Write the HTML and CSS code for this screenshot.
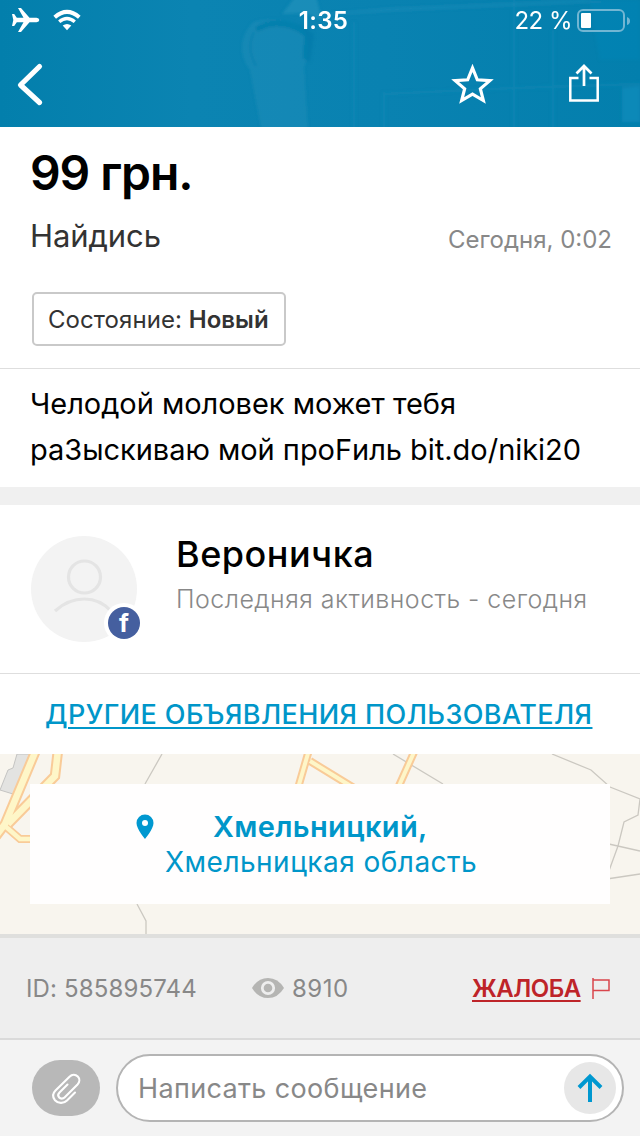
FILE: index.html
```html
<!DOCTYPE html>
<html lang="ru">
<head>
<meta charset="utf-8">
<title>Объявление</title>
<link rel="stylesheet" href="styles.css">
</head>
<body>
<div class="screen">
  <header class="header">
    <svg class="header-photo" viewBox="0 0 640 128" aria-hidden="true">
      <defs><filter id="soft"><feGaussianBlur stdDeviation="1.5"/></filter>
      <linearGradient id="tone"><stop offset="0" stop-color="#037fac"/><stop offset=".3" stop-color="#0b84b2"/><stop offset=".6" stop-color="#0982b1"/><stop offset="1" stop-color="#037fad"/></linearGradient></defs>
      <path d="M0 0H640V128H0z" fill="url(#tone)"/>
      <g filter="url(#soft)">
        <path d="M296 -4H316L322 20 305 13 282 14z" fill="#2b97c0" opacity=".5"/>
        <path d="M254 22C240 34 238 54 250 70L262 132H308L304 68C312 40 306 24 286 20Q266 18 254 22z" fill="#2492bd" opacity=".35"/>
        <path d="M254 28Q276 12 306 28L314 34 310 62 302 58 304 36Q280 20 258 32z" fill="#0278a8" opacity=".55"/>
        <path d="M254 32Q246 48 256 66" fill="none" stroke="#0b7cab" stroke-width="2" opacity=".6"/>
        <path d="M318 14L388 8 582 0 604 2 396 11 318 16z" fill="#1f90bb" opacity=".5"/>
        <path d="M354 22V128M384 92V128M384 94L514 88 640 84M514 0V128M553 30V128" fill="none" stroke="#1a8cb8" stroke-width="2.500" opacity=".4"/>
        <path d="M590 0H640V60H600z" fill="#1088b9" opacity=".4"/>
        <path d="M622 88L640 86V122H622z" fill="#168fc0" opacity=".6"/>
      </g>
    </svg>
    <div class="status">
      <div class="status-left">
        <svg class="plane" viewBox="0 0 28 26"><path d="M0 7H2.200L4.800 10.700H11.500L6 1H9L17.500 10.700H24.500Q27.300 11.200 27.300 13Q27.300 14.800 24.500 15.300H17.500L9 25H6L11.500 15.300H4.800L2.200 19H0L1.300 13z" fill="#fff"/></svg>
        <svg class="wifi" viewBox="0 0 28 21"><path d="M1.700 7.200Q14-3.500 26.300 7.200" fill="none" stroke="#fff" stroke-width="4"/><path d="M6.200 11.800Q14 5.200 21.800 11.800" fill="none" stroke="#fff" stroke-width="3.400"/><path d="M9.700 15.600Q14 12.200 18.300 15.600L14 20.300z" fill="#fff"/></svg>
      </div>
      <span class="clock">1:35</span>
      <div class="status-right">
        <span class="percent">22 %</span>
        <svg class="battery" viewBox="0 0 54 24"><rect x="1" y="1" width="46" height="21" rx="5" fill="none" stroke="#72b6d3" stroke-width="2"/><rect x="4" y="4" width="10" height="15" rx="1" fill="#fff"/><path d="M50 8Q53 9 53 12T50 16z" fill="#72b6d3"/></svg>
      </div>
    </div>
    <nav class="nav">
      <svg class="back" viewBox="0 0 28 44"><path d="M23.500 3.500L4.500 22L23.500 39.500" fill="none" stroke="#fff" stroke-width="5.200" stroke-linecap="round" stroke-linejoin="round"/></svg>
      <div class="actions">
        <svg class="star" viewBox="0 0 42 40"><path d="M21 5.200L25.300 15.800L36.500 16.500L28 23.800L30.700 34.300L21 28.600L11.300 34.300L14 23.800L5.500 16.500L16.700 15.800z" fill="none" stroke="#fff" stroke-width="2.800"/></svg>
        <svg class="share" viewBox="0 0 30 38"><path d="M9.500 14H1.300V36.500H28.700V14H20.500" fill="none" stroke="#fff" stroke-width="2.500"/><path d="M15 22V3M7.500 9.500L15 2L22.500 9.500" fill="none" stroke="#fff" stroke-width="2.700"/></svg>
      </div>
    </nav>
  </header>

  <section class="summary">
    <h1 class="price">99 грн.</h1>
    <div class="title-row">
      <span class="title">Найдись</span>
      <span class="date">Сегодня, 0:02</span>
    </div>
    <div class="tag"><span>Состояние:</span> <b>Новый</b></div>
  </section>

  <section class="description"><span>Челодой моловек может тебя</span><br><span>раЗыскиваю мой проFиль bit.do/niki20</span></section>

  <section class="seller">
    <div class="avatar">
      <svg class="avatar-art" viewBox="0 0 110 106"><circle cx="53" cy="53" r="53" fill="#f3f3f3"/><g fill="none" stroke="#e4e4e4" stroke-width="3.200"><circle cx="53.500" cy="41" r="16"/><path d="M24 75Q37 63 53.500 63Q69 63 80 75"/></g><circle cx="93" cy="87" r="20" fill="#fff"/></svg>
      <span class="badge">f</span>
    </div>
    <div class="seller-info">
      <h2 class="seller-name">Вероничка</h2>
      <p class="activity">Последняя активность - сегодня</p>
    </div>
  </section>

  <section class="more"><a class="more-link">ДРУГИЕ ОБЪЯВЛЕНИЯ ПОЛЬЗОВАТЕЛЯ</a></section>

  <section class="map">
    <svg class="map-art" viewBox="0 0 640 180" aria-hidden="true">
      <path d="M17 0H31L13 40L0 36L8 16L13 14z" fill="#e3e3e1" stroke="#c4c4c2"/>
      <g fill="none" stroke="#cbc8c1" stroke-width="1.300">
        <path d="M162 0L145 30M137 150L146 167V180M393 0L443 30M552 0L591 16L610 33L640 45L638 61L624 68L618 92L606 125M600 88L640 97M600 126L640 120"/>
      </g>
      <g fill="none" stroke="#f9cb98">
        <path d="M36 -4L5 70L-4 82M58 -4L55 22L8 70" stroke-width="10.500"/>
        <path d="M5 72L20 85H45" stroke-width="8"/>
        <path d="M309 -4L298 34M310 7L354 34M415 -4L398 34" stroke-width="8"/>
      </g>
      <g fill="none" stroke="#fef6c8">
        <path d="M36 -4L5 70L-4 82M58 -4L55 22L8 70" stroke-width="6.500"/>
        <path d="M5 72L20 85H45" stroke-width="4.500"/>
        <path d="M309 -4L298 34M310 7L354 34M415 -4L398 34" stroke-width="4"/>
      </g>
    </svg>
    <div class="location">
      <div class="city-row">
        <svg class="pin" viewBox="0 0 18 26"><path d="M9 .500A8.500 8.500 0 0 0 .500 9C.500 15 9 25 9 25S17.500 15 17.500 9A8.500 8.500 0 0 0 9 .500z" fill="#0098d0"/><circle cx="9" cy="9" r="3" fill="#fff"/></svg>
        <span class="city">Хмельницкий,</span>
      </div>
      <span class="region">Хмельницкая область</span>
    </div>
  </section>

  <section class="meta">
    <span class="ad-id">ID: 585895744</span>
    <svg class="eye" viewBox="0 0 32 20"><path d="M0 10Q6 0 16 0T32 10Q26 20 16 20T0 10z" fill="#b5b5b3"/><circle cx="16" cy="10" r="5.700" fill="#b5b5b3" stroke="#eee" stroke-width="2.800"/></svg>
    <span class="views">8910</span>
    <a class="report">ЖАЛОБА</a>
    <svg class="flag" viewBox="0 0 18 21"><path d="M1 0V21M1 2H17V12.500H1" fill="none" stroke="#d9464c" stroke-width="1.500"/></svg>
  </section>

  <footer class="composer">
    <div class="attach"><svg class="clip" viewBox="0 0 28 31"><path d="M23 19.500L15 27.500C11.500 31 6 30.500 3 27.200C.300 24 .500 20.500 3.500 17.500L17.500 3.700C20 1.300 23.500 1.300 25.800 3.500C28 5.700 27.800 9 25.500 11.500L12.500 24.500C11 26 8.500 26 7.200 24.500C5.800 23 6 21 7.500 19.500L15.500 11.500" fill="none" stroke="#fff" stroke-width="2.100" stroke-linecap="round"/></svg></div>
    <div class="field">
      <span class="placeholder">Написать сообщение</span>
      <div class="send"><svg class="arrow" viewBox="0 0 26 28"><path d="M13 28V2M2 13.500L13 2.500L24 13.500" fill="none" stroke="#0098d0" stroke-width="4"/></svg></div>
    </div>
  </footer>
</div>
</body>
</html>
```
FILE: styles.css
```css
* { box-sizing: border-box; margin: 0; }
body { font-family: Inter, "Noto Sans", sans-serif; background: #fff; color: #000; }
svg { display: block; flex: none; overflow: visible; }
span, a, h1, h2, p { white-space: nowrap; }
.screen { width: 640px; height: 1136px; overflow: hidden; display: flex; flex-direction: column; }
.screen > * { flex: none; }

.header { height: 127px; position: relative; background: #0480ae; color: #fff; overflow: hidden; }
.header-photo { position: absolute; left: 0; top: 0; width: 640px; height: 128px; }
.status { position: relative; height: 40px; padding: 0 12px; display: grid; grid-template-columns: 1fr auto 1fr; align-items: center; }
.status-left { display: flex; align-items: center; gap: 13px; }
.plane { width: 28px; height: 26px; }
.wifi { width: 28px; height: 21px; }
.clock { font-size: 24px; font-weight: 600; letter-spacing: .3px; line-height: 38px; padding: 2px 0 0 7px; }
.status-right { display: flex; align-items: center; justify-content: flex-end; gap: 6px; }
.percent { font-size: 24px; line-height: 38px; letter-spacing: -.5px; padding-top: 2px; margin-right: -1px; }
.battery { width: 54px; height: 24px; margin: 1px -3px 0 0; }
.nav { position: relative; height: 87px; padding: 0 41px 0 16px; display: flex; align-items: center; justify-content: space-between; }
.back { width: 28px; height: 44px; margin-top: 2px; }
.actions { display: flex; align-items: center; gap: 73px; }
.star { width: 47px; height: 45px; margin-top: 2px; }
.share { width: 30px; height: 38px; margin-top: -2px; }

.summary { height: 242px; padding: 17px 28px 0 30px; border-bottom: 1px solid #dedede; }
.price { font-size: 48px; font-weight: 600; line-height: 58px; letter-spacing: -1.1px; }
.title-row { display: flex; justify-content: space-between; align-items: baseline; margin-top: 14px; line-height: 40px; }
.title { font-size: 31px; color: #333; letter-spacing: -.1px; }
.date { font-size: 24px; line-height: 43px; color: #888; position: relative; top: 1px; }
.tag { width: 254px; height: 54px; margin: 32px 0 0 2px; padding-left: 14px; border: 2px solid #c9c9c9; border-radius: 5px; font-size: 24px; line-height: 51px; color: #333; white-space: nowrap; letter-spacing: .05px; }
.tag b { font-weight: 600; }

.description { height: 118px; padding: 12px 30px 0; font-size: 29px; line-height: 46px; letter-spacing: -.03px; }

.seller { height: 187px; border-top: 18px solid #f0f0f0; border-bottom: 1px solid #dedede; display: flex; padding: 31px 0 0 31px; }
.avatar { position: relative; width: 110px; height: 106px; }
.avatar-art { width: 110px; height: 106px; }
.badge { position: absolute; left: 77px; top: 71px; width: 32px; height: 32px; border-radius: 50%; background: #455f9f; color: #fff; text-align: center; font: 700 25px/33px Inter, sans-serif; }
.seller-info { padding-left: 35px; }
.seller-name { font-size: 36px; font-weight: 500; line-height: 40px; margin-top: -2px; letter-spacing: .5px; }
.activity { font-size: 25px; font-weight: 300; line-height: 32px; color: #888; margin-top: 9px; letter-spacing: .47px; }

.more { height: 80px; padding-left: 45px; }
.more-link { font-size: 27px; line-height: 81px; font-weight: 500; color: #0096c9; letter-spacing: .41px; text-decoration: underline; text-decoration-thickness: 2px; text-underline-offset: 3px; }

.map { height: 180px; position: relative; padding: 30px; background: #f8f5ee; overflow: hidden; }
.map-art { position: absolute; left: 0; top: 0; width: 640px; height: 180px; }
.location { position: relative; height: 120px; background: #fffefe; padding-top: 26px; color: #0096c9; font-size: 28px; line-height: 35px; letter-spacing: .47px; }
.city-row { display: flex; align-items: center; height: 35px; padding-left: 106px; }
.pin { width: 18px; height: 26px; margin-top: -2px; }
.city { margin: -2px 0 0 59px; font-size: 29px; font-weight: 600; letter-spacing: .35px; }
.region { display: block; margin-left: 135px; }

.meta { height: 106px; border-top: 4px solid #dfdfdd; border-bottom: 2px solid #dadada; background: #eee; display: flex; align-items: center; padding-left: 26px; font-size: 24px; color: #888; letter-spacing: .15px; }
.ad-id { width: 226px; padding-top: 1px; }
.eye { width: 32px; height: 20px; }
.views { margin-left: 8px; width: 180px; padding-top: 1px; letter-spacing: .5px; }
.report { color: #be2429; font-weight: 600; width: 110px; padding-top: 1px; letter-spacing: -.5px; text-decoration: underline; text-decoration-thickness: 2px; text-underline-offset: 3px; }
.flag { width: 18px; height: 21px; margin-left: 10px; }

.composer { height: 96px; background: #f3f3f3; display: flex; align-items: center; padding-left: 32px; gap: 16px; }
.attach { width: 68px; height: 56px; border-radius: 28px; background: #b8b8b8; display: grid; place-items: center; }
.clip { width: 28px; height: 31px; }
.field { width: 508px; height: 68px; border: 2px solid #b4b4b4; border-radius: 34px; background: #fff; display: flex; align-items: center; justify-content: space-between; padding: 0 6px 0 20px; }
.placeholder { font-size: 27px; color: #888; letter-spacing: .35px; }
.send { width: 52px; height: 52px; border-radius: 50%; background: #e7e7e7; display: grid; place-items: center; }
.arrow { width: 26px; height: 28px; }
```
